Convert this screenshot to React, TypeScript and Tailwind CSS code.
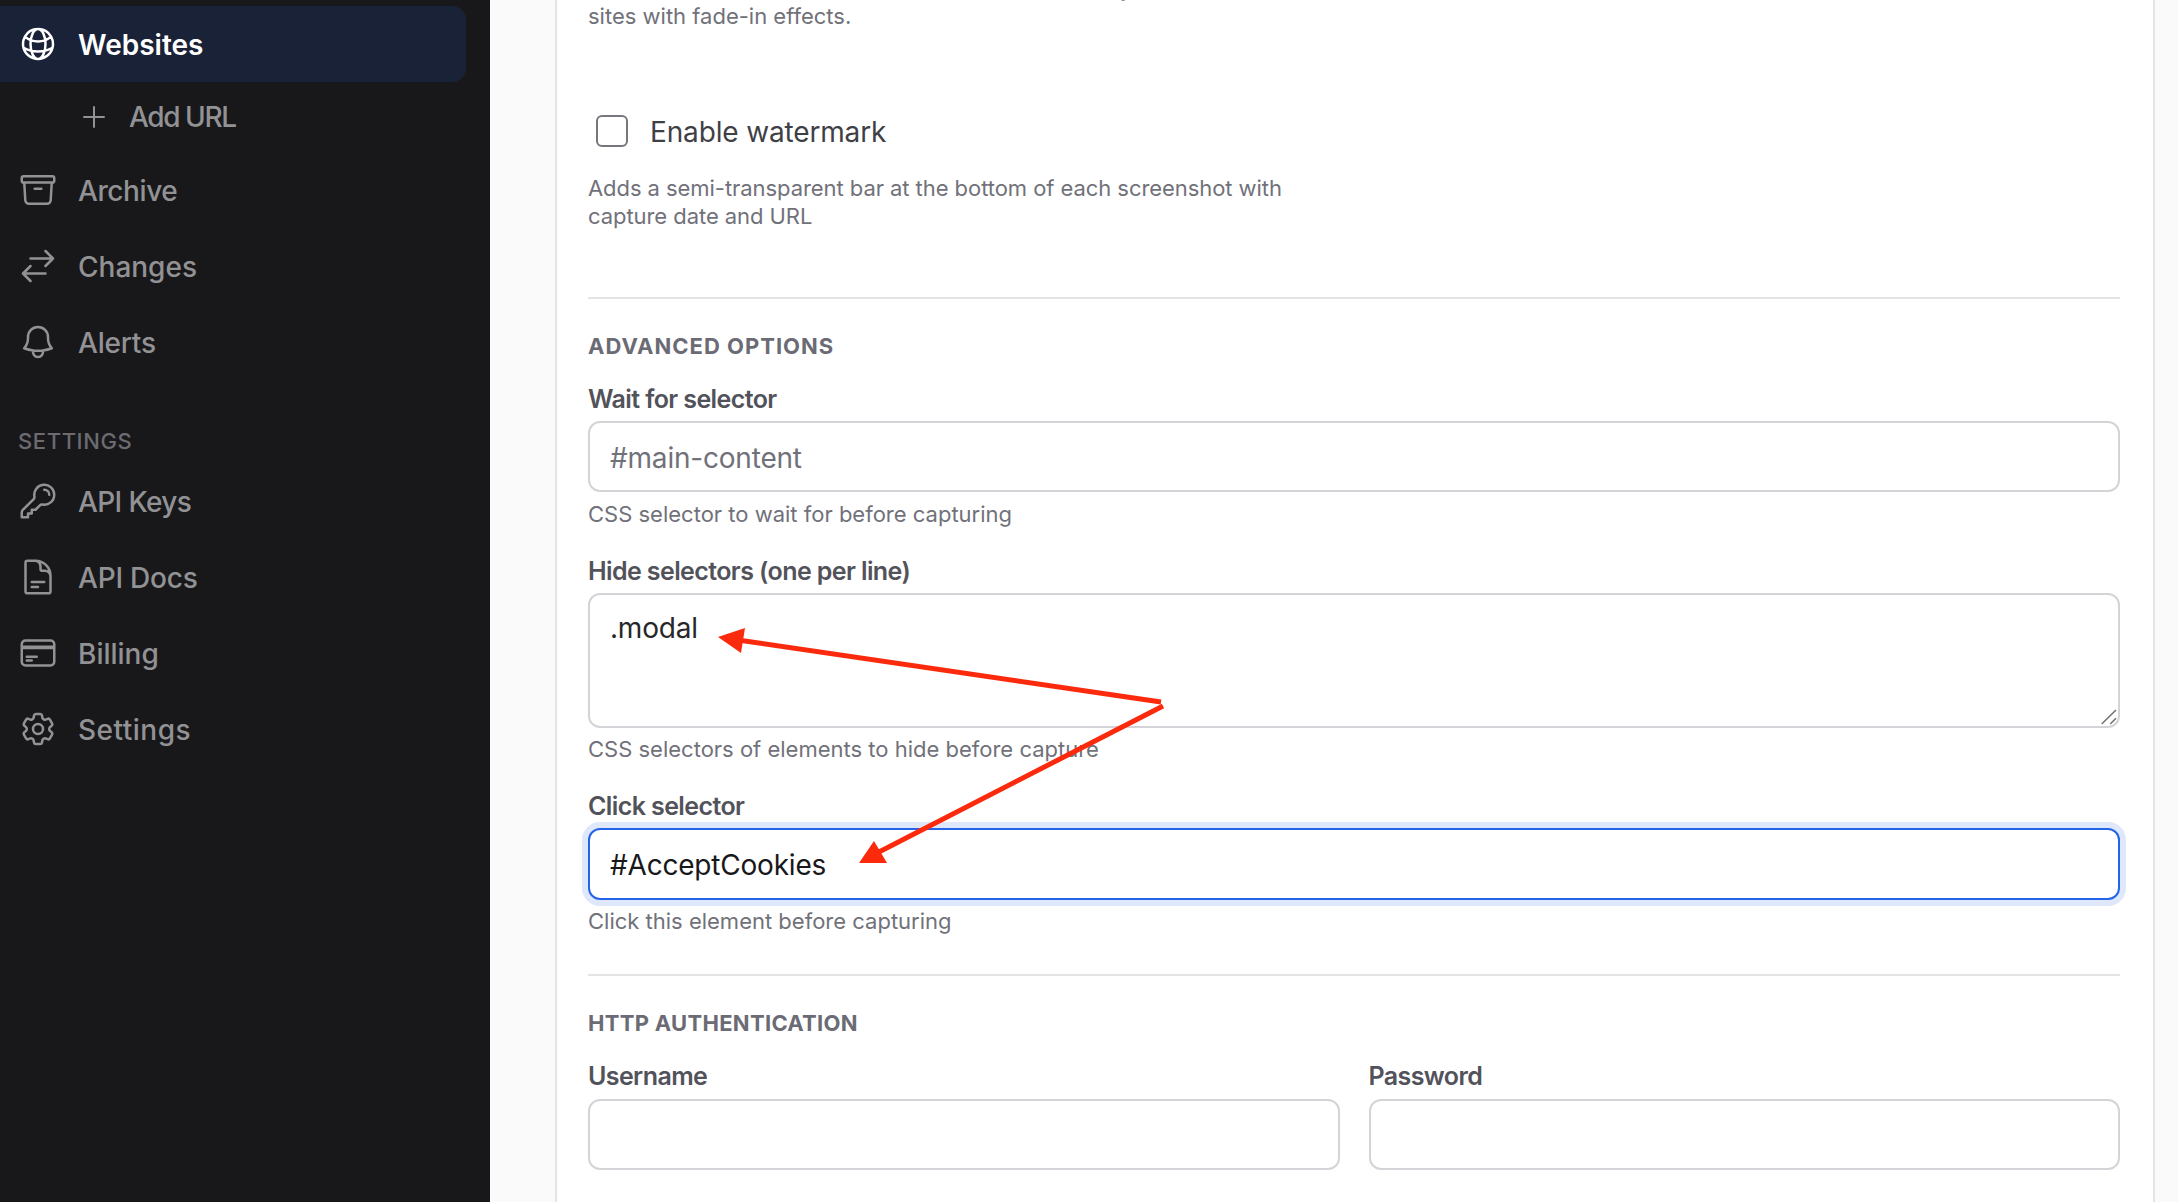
import {
  HiOutlineArchiveBox,
  HiOutlineArrowsRightLeft,
  HiOutlineBell,
  HiOutlineCog6Tooth,
  HiOutlineCreditCard,
  HiOutlineDocumentText,
  HiOutlineGlobeAlt,
  HiOutlineKey,
  HiOutlinePlus,
} from "react-icons/hi2";

const mainNav = [
  { label: "Archive", icon: HiOutlineArchiveBox, tracking: "tracking-[-0.4px]" },
  { label: "Changes", icon: HiOutlineArrowsRightLeft, tracking: "tracking-[0px]" },
  { label: "Alerts", icon: HiOutlineBell, tracking: "tracking-[-0.2px]" },
];

const settingsNav = [
  { label: "API Keys", icon: HiOutlineKey, tracking: "tracking-[-0.6px]" },
  { label: "API Docs", icon: HiOutlineDocumentText, tracking: "tracking-[-0.2px]" },
  { label: "Billing", icon: HiOutlineCreditCard, tracking: "tracking-[0px]" },
  { label: "Settings", icon: HiOutlineCog6Tooth, tracking: "tracking-[0.5px]" },
];

function NavItem({ label, icon: Icon, tracking }: { label: string; icon: typeof HiOutlineKey; tracking: string }) {
  return (
    <div className="flex h-[76px] items-center gap-[20px] pl-[18px] text-[#929295]">
      <Icon className="h-[40px] w-[40px] shrink-0" />
      <span className={`pt-[2px] text-[28px] font-medium ${tracking}`}>{label}</span>
    </div>
  );
}

function Label({ children }: { children: string }) {
  return <div className="h-[28px] text-[25px] leading-[28px] font-semibold tracking-[-0.6px] text-[#52525b]">{children}</div>;
}

function Help({ children }: { children: string }) {
  return <p className="h-[28px] text-[22px] leading-[28px] text-[#71717a]">{children}</p>;
}

const fieldClass =
  "block h-[71px] w-full rounded-[12px] border-2 border-[#d4d4d8] bg-white px-[20px] pt-[2px] text-[28px] tracking-[-0.2px] text-[#27272a] outline-none placeholder:text-[#71717a]";

export default function App() {
  return (
    <div className="relative flex h-[1202px] w-[2178px] overflow-hidden bg-[#fafafa] font-['Inter',sans-serif]">
      {/* Sidebar */}
      <aside className="w-[490px] shrink-0 bg-[#18181b] pt-[6px]">
        <div className="flex h-[76px] w-[466px] items-center gap-[20px] rounded-r-[14px] bg-[#1a2238] pl-[18px] text-white">
          <HiOutlineGlobeAlt className="h-[40px] w-[40px] shrink-0" />
          <span className="pt-[2px] text-[28px] font-semibold tracking-[0px]">Websites</span>
        </div>
        <div className="flex h-[70px] items-center gap-[19px] pl-[78px] text-[#929295]">
          <HiOutlinePlus className="h-[32px] w-[32px] shrink-0" />
          <span className="text-[28px] font-medium tracking-[-1.4px]">Add URL</span>
        </div>
        {mainNav.map((item) => (
          <NavItem key={item.label} {...item} />
        ))}
        <div className="mt-[47px] h-[28px] pl-[18px] text-[22px] leading-[28px] font-medium tracking-[0.6px] text-[#6b6b70] uppercase">
          Settings
        </div>
        <div className="mt-[8px]">
          {settingsNav.map((item) => (
            <NavItem key={item.label} {...item} />
          ))}
        </div>
      </aside>

      {/* Settings card */}
      <main className="ml-[65px] w-[1600px] shrink-0 border-x-2 border-[#e4e4e7] bg-white pr-[33px] pl-[31px]">
        <div className="mt-[-26px]">
          <Help>Scrolls the whole screen to load all the content lazily</Help>
          <Help>sites with fade-in effects.</Help>
        </div>

        <div className="mt-[85px] flex h-[32px] items-center pl-[8px]">
          <span className="h-[32px] w-[32px] rounded-[6px] border-2 border-[#76767c] bg-white" />
          <span className="ml-[22px] pt-[2px] text-[28px] tracking-[-0.15px] text-[#3f3f46]">Enable watermark</span>
        </div>
        <div className="mt-[27px] w-[720px] text-[22px] leading-[28px] tracking-[-0.06px] text-[#71717a]">
          Adds a semi-transparent bar at the bottom of each screenshot with capture date and URL
        </div>

        <div className="mt-[67px] h-[2px] bg-[#e4e4e7]" />

        <h3 className="mt-[33px] h-[28px] text-[22px] leading-[28px] font-bold tracking-[1px] text-[#6b6b75] uppercase">
          Advanced options
        </h3>
        <div className="mt-[25px]">
          <Label>Wait for selector</Label>
        </div>
        <input readOnly placeholder="#main-content" className={`mt-[8px] ${fieldClass}`} />
        <div className="mt-[8px]">
          <Help>CSS selector to wait for before capturing</Help>
        </div>

        <div className="mt-[29px]">
          <Label>Hide selectors (one per line)</Label>
        </div>
        <div className="relative mt-[8px]">
          <textarea
            readOnly
            value=".modal"
            className="block h-[135px] w-full resize-none rounded-[12px] border-2 border-[#d4d4d8] bg-white px-[20px] pt-[15px] text-[28px] leading-[36px] tracking-[-0.2px] text-[#27272a] outline-none"
          />
          <svg className="absolute right-[2px] bottom-[2px] h-[18px] w-[18px]" viewBox="0 0 18 18" fill="none" stroke="#707070" strokeWidth="1.5">
            <path d="M1.7 16 16 2M10.3 16 16 10.3" />
          </svg>
        </div>
        <div className="mt-[7px]">
          <Help>CSS selectors of elements to hide before capture</Help>
        </div>

        <div className="mt-[29px]">
          <Label>Click selector</Label>
        </div>
        <input
          readOnly
          value="#AcceptCookies"
          className="mt-[8px] block h-[72px] w-full rounded-[12px] border-2 border-[#2563eb] bg-white px-[20px] pt-[2px] text-[28px] tracking-[-0.2px] text-[#18181b] shadow-[0_0_0_6px_#dfe7fb] outline-none"
        />
        <div className="mt-[7px]">
          <Help>Click this element before capturing</Help>
        </div>

        <div className="mt-[39px] h-[2px] bg-[#e4e4e7]" />

        <h3 className="mt-[33px] h-[28px] text-[22px] leading-[28px] font-bold tracking-[0.3px] text-[#6b6b75] uppercase">
          HTTP Authentication
        </h3>
        <div className="mt-[25px] grid grid-cols-2 gap-x-[29px]">
          <div>
            <Label>Username</Label>
            <input readOnly className={`mt-[9px] ${fieldClass}`} />
          </div>
          <div>
            <Label>Password</Label>
            <input readOnly className={`mt-[9px] ${fieldClass}`} />
          </div>
        </div>
      </main>

      {/* Annotation arrows */}
      <svg className="absolute top-0 left-0 h-[1202px] w-[2178px]" viewBox="0 0 2178 1202" fill="none">
        <line x1="1161" y1="702" x2="738" y2="640" stroke="#fb2a0c" strokeWidth="5" />
        <polygon points="718,637 745,628 741,653" fill="#fb2a0c" />
        <line x1="1163" y1="706" x2="877" y2="853" stroke="#fb2a0c" strokeWidth="5" />
        <polygon points="859,863 874,841 887,863" fill="#fb2a0c" />
      </svg>
    </div>
  );
}
